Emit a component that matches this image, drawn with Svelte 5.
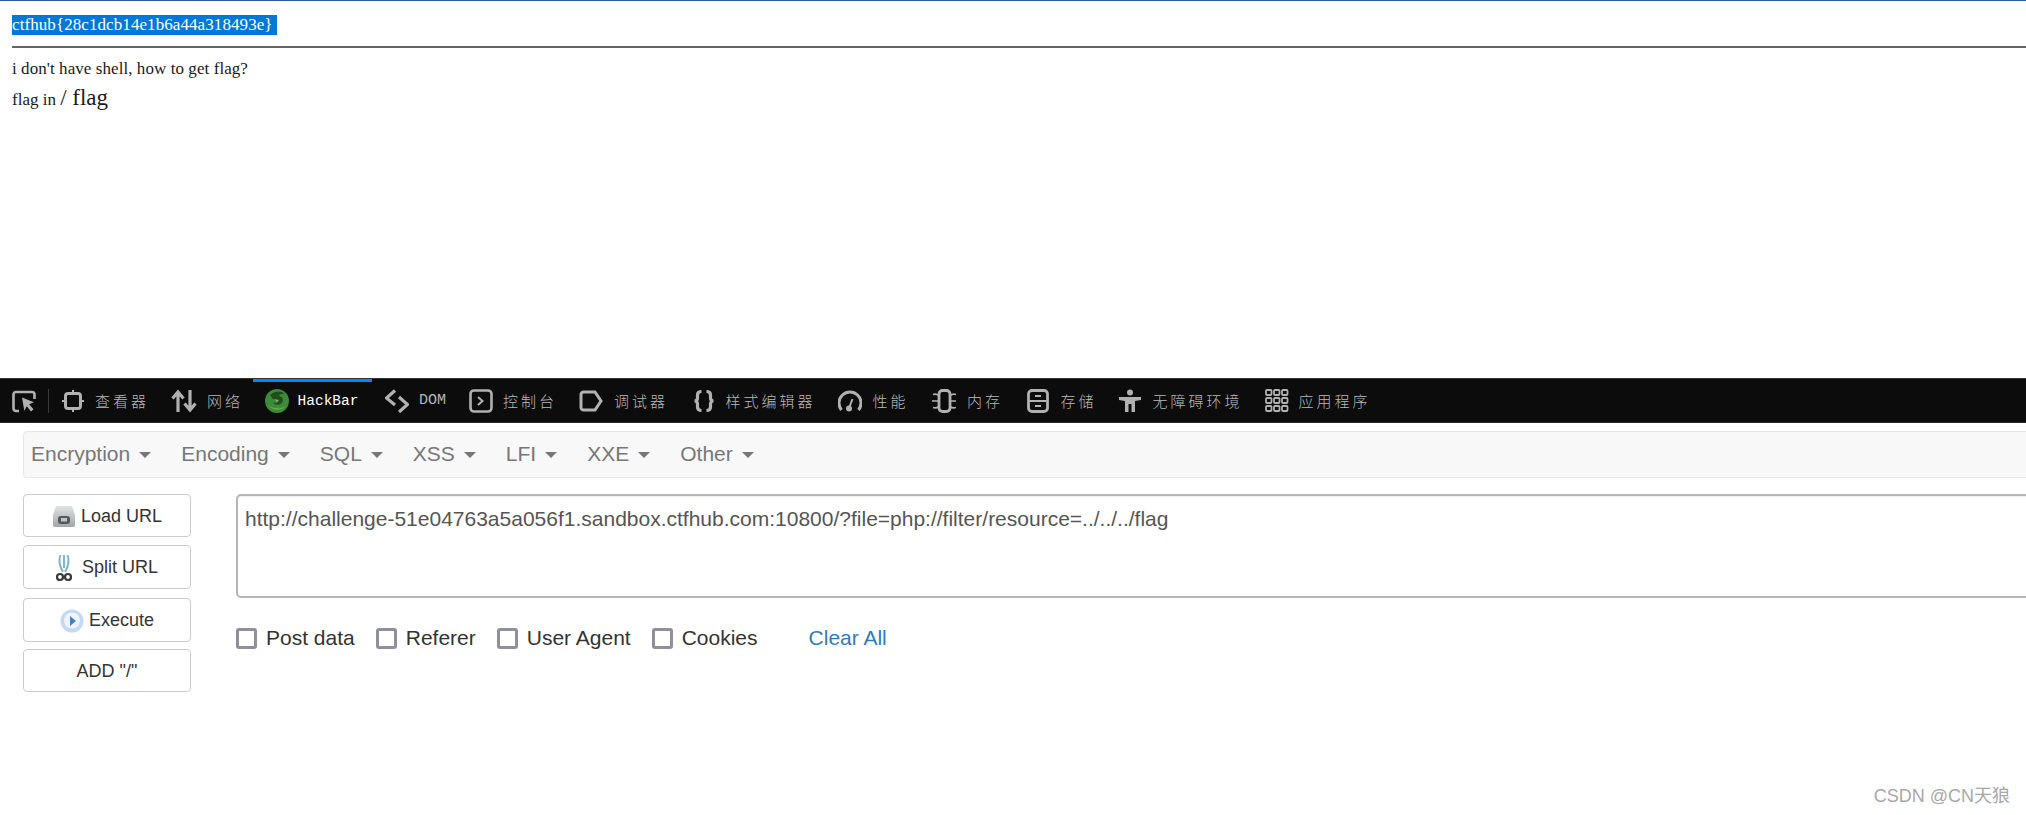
<script>
	const tabs = [
		{ id: 'inspector', label: '查看器' },
		{ id: 'network', label: '网络' },
		{ id: 'hackbar', label: 'HackBar', active: true },
		{ id: 'dom', label: 'DOM', latin: true },
		{ id: 'console', label: '控制台' },
		{ id: 'debugger', label: '调试器', short: true },
		{ id: 'style', label: '样式编辑器' },
		{ id: 'perf', label: '性能', short: true },
		{ id: 'memory', label: '内存', short: true },
		{ id: 'storage', label: '存储' },
		{ id: 'a11y', label: '无障碍环境' },
		{ id: 'apps', label: '应用程序' }
	];
	const menus = ['Encryption', 'Encoding', 'SQL', 'XSS', 'LFI', 'XXE', 'Other'];
	const checks = ['Post data', 'Referer', 'User Agent', 'Cookies'];
	let url = 'http://challenge-51e04763a5a056f1.sandbox.ctfhub.com:10800/?file=php://filter/resource=../../../flag';
</script>

<div class="root">
	<section class="page">
		<div class="flag"><span class="selected">ctfhub{'{'}28c1dcb14e1b6a44a318493e{'}'} </span></div>
		<hr />
		<p class="line">i don't have shell, how to get flag?</p>
		<p class="line two">flag in <span class="big">/ flag</span></p>
	</section>

	<div class="toolbar">
		<span class="pick">
			<svg width="24" height="24" viewBox="0 0 24 24" fill="none" stroke="#b1b1b1" stroke-width="2.6">
				<path d="M7 22H4a2.500 2.500 0 0 1-2.500-2.500v-14A2.500 2.500 0 0 1 4 3h16a2.500 2.500 0 0 1 2.500 2.500V10" />
				<path d="M10 8.500l12 4.800-4.800 2 4.300 5-2.500 2.200-4.200-5.200-2.500 4.500z" fill="#b1b1b1" stroke="none" />
			</svg>
		</span>
		{#each tabs as tab}
			<div class="tab" class:active={tab.active} class:short={tab.short} class:tight={tab.latin}>
				<svg
					class="icon"
					width={tab.id === 'network' ? 26 : 24}
					height="24"
					viewBox={tab.id === 'network' ? '0 0 26 24' : '0 0 24 24'}
					fill="none"
					stroke="#b1b1b1"
					stroke-width="2.600"
				>
					{#if tab.id === 'inspector'}
						<rect x="4.500" y="4.500" width="15" height="15" rx="2.500" stroke-width="3" />
						<path d="M12 1v3M12 20v3M1 12h3M20 12h3" stroke-width="2" />
					{:else if tab.id === 'network'}
						<path d="M7 23V3M1.500 9.500L7 3l5.500 6.500M19 1v20M13.500 14.500L19 21l5.500-6.500" stroke-width="3.200" />
					{:else if tab.id === 'hackbar'}
						<circle cx="12" cy="12" r="12" fill="#3f8a38" stroke="none" />
						<path d="M5 6c4-4 11-5 15-1-3-.5-5 .5-6 2 3 .5 5 3 3.500 6-2 3.500-7 3.500-9.500 .5 2.500 1 5 .5 5.500-1.500-3 0-6-1.500-8.500-6z" fill="#1f4f1c" stroke="none" />
						<path d="M3 16c4 6 13 6.500 18 1-5 3-12 3.500-18-1z" fill="#62a953" stroke="none" />
						<path d="M9 10l5 1-2 2z" fill="#7dbb6c" stroke="none" />
					{:else if tab.id === 'dom'}
						<path d="M10 1.500L1.500 9l8.500 7M14 8l8.500 7.500L14 23" stroke-width="3.200" />
					{:else if tab.id === 'console'}
						<rect x="1.500" y="1.500" width="21" height="21" rx="3.500" />
						<path d="M9 8l4.500 4L9 16" stroke-width="2" />
					{:else if tab.id === 'debugger'}
						<path d="M4.500 3h11.500L22 12l-6 9H4.500A2.500 2.500 0 0 1 2 18.500V5.500A2.500 2.500 0 0 1 4.500 3z" stroke-width="3" />
					{:else if tab.id === 'style'}
						<path d="M9.500 2.500c-3 0-4 1.500-4 3.500v3c0 2-1 3-3 3 2 0 3 1 3 3v3c0 2 1 3.500 4 3.500M14.500 2.500c3 0 4 1.500 4 3.500v3c0 2 1 3 3 3-2 0-3 1-3 3v3c0 2-1 3.500-4 3.500" stroke-width="3.200" />
					{:else if tab.id === 'perf'}
						<path d="M3.500 21A11 11 0 1 1 20.500 21" stroke-width="3" />
						<circle cx="11" cy="19.500" r="3" fill="#b1b1b1" stroke="none" />
						<path d="M11 19l3.500-9" stroke-width="2" />
					{:else if tab.id === 'memory'}
						<rect x="7" y="1.500" width="11" height="21" rx="3.500" stroke-width="2.800" />
						<path d="M1 5.500c3-1 4-.5 6 1M0 12h7M1 18.500c3 1 4 .5 6-1M18 6.500c2-1.500 3-2 6-1M18 12h6M18 17.500c2 1.500 3 2 6 1" stroke-width="1.600" />
					{:else if tab.id === 'storage'}
						<rect x="1.500" y="1.500" width="19" height="21" rx="3.500" stroke-width="2.800" />
						<path d="M1.500 12h19M8 7h6M8 17h6" stroke-width="2" />
					{:else if tab.id === 'a11y'}
						<circle cx="11" cy="3.500" r="3" fill="#b1b1b1" stroke="none" />
						<path d="M0 8h22v3l-6 1v11h-3.500v-8h-3v8H6V12l-6-1z" fill="#b1b1b1" stroke="none" />
					{:else}
						{#each [1, 9, 17] as y}
							{#each [1, 9, 17] as x}
								<rect {x} {y} width="5.500" height="5" rx="1" stroke-width="1.800" />
							{/each}
						{/each}
					{/if}
				</svg>
				<span class="tab-label" class:latin={tab.latin} class:bar={tab.active}>{tab.label}</span>
			</div>
		{/each}
	</div>

	<section class="hackbar">
		<nav class="menu">
			{#each menus as item}
				<span class="menu-item">{item}<i class="caret"></i></span>
			{/each}
		</nav>

		<div class="body">
			<div class="actions">
				<button>
					<svg width="24" height="22" viewBox="0 0 24 22">
						<defs>
							<linearGradient id="drive" x1="0" y1="0" x2="0" y2="1">
								<stop offset="0" stop-color="#dfe2e3" />
								<stop offset="1" stop-color="#a3a6a8" />
							</linearGradient>
						</defs>
						<path d="M4 1h16l3 9v10a2 2 0 0 1-2 2H3a2 2 0 0 1-2-2V10z" fill="url(#drive)" />
						<rect x="6" y="11" width="12" height="8" rx="3" fill="#55595b" />
						<rect x="9" y="13" width="6" height="3.500" fill="#c2c5c6" />
					</svg>
					Load URL
				</button>
				<button class="split">
					<svg width="16" height="28" viewBox="0 0 16 28" fill="none">
						<path d="M4.500 1c-2 5-1 11 2.500 17M11.500 1c2 5 1 11-2.500 17M8 1v13" stroke="#7fb4cc" stroke-width="2" />
						<circle cx="4" cy="23" r="3" stroke="#3a3a3a" stroke-width="2.200" />
						<circle cx="12" cy="23" r="3" stroke="#3a3a3a" stroke-width="2.200" />
					</svg>
					Split URL
				</button>
				<button class="run">
					<svg width="24" height="24" viewBox="0 0 24 24">
						<circle cx="12" cy="12" r="11.500" fill="#c5d9f0" />
						<circle cx="12" cy="11.500" r="8" fill="#eef4fb" />
						<path d="M10 7l6 5-6 5z" fill="#4a7fc0" />
					</svg>
					Execute
				</button>
				<button class="add">ADD "/"</button>
			</div>

			<div class="main">
				<textarea bind:value={url} spellcheck="false"></textarea>
				<div class="options">
					{#each checks as name}
						<label><input type="checkbox" />{name}</label>
					{/each}
					<span class="clear">Clear All</span>
				</div>
			</div>
		</div>
	</section>

	<span class="watermark">CSDN @CN天狼</span>
</div>

<style>
	:global(body) {
		overflow: hidden;
		background: #fff;
	}

	.root {
		position: relative;
		height: 815px;
		overflow: hidden;
		font-family: 'Liberation Sans', Arial, sans-serif;
	}

	.page {
		height: 378px;
		box-sizing: border-box;
		padding: 14px 12px 0;
		border-top: 1px solid #2b579a;
		font-family: 'Liberation Serif', 'Times New Roman', serif;
		font-size: 17px;
		color: #1a1a1a;
	}

	.flag {
		height: 20px;
	}

	.selected {
		display: inline-block;
		line-height: 20px;
		padding-right: 4px;
		letter-spacing: 0.08px;
		background: #0078d7;
		color: #fff;
		white-space: pre;
	}

	hr {
		margin: 11px -12px 0 0;
		border: 0;
		height: 2px;
		background: #666;
	}

	.line {
		margin: 11px 0 0;
		line-height: 20px;
		letter-spacing: 0.07px;
	}

	.line.two {
		margin-top: 5px;
		line-height: 28px;
		letter-spacing: 0;
	}

	.big {
		font-size: 23px;
	}

	.toolbar {
		display: flex;
		align-items: center;
		height: 45px;
		box-sizing: border-box;
		background: #0c0c0c;
		border-top: 1px solid #333;
		border-bottom: 1px solid #2a2a2a;
	}

	.pick {
		display: flex;
		padding: 0 11.500px 0 12px;
		border-right: 1px solid #3a3a3a;
	}

	.tab {
		display: flex;
		align-items: center;
		gap: 10px;
		height: 100%;
		padding: 0 12.500px;
		box-sizing: border-box;
	}

	.tab.short {
		gap: 11px;
		padding-right: 14px;
	}

	.tab.tight {
		padding-right: 10.500px;
	}

	.tab.active {
		gap: 9px;
		border-top: 3px solid #0a84ff;
		padding: 0 14px 3px 12px;
	}

	.icon {
		flex: none;
	}

	.tab-label {
		font-family: 'Noto Sans CJK SC', sans-serif;
		font-weight: 300;
		font-size: 15px;
		letter-spacing: 3px;
		margin-right: -3px;
		color: #b9b9b9;
		white-space: nowrap;
	}

	.tab-label.latin {
		font-family: 'Liberation Mono', monospace;
		font-size: 15px;
		font-weight: 400;
		letter-spacing: 0;
		margin-right: 0;
	}

	.tab-label.bar {
		font-family: 'Liberation Mono', monospace;
		font-size: 14.500px;
		font-weight: 400;
		letter-spacing: 0;
		margin-right: 0;
		color: #fff;
	}

	.hackbar {
		padding: 8px 0 0 23px;
	}

	.menu {
		display: flex;
		align-items: center;
		gap: 30px;
		height: 47px;
		box-sizing: border-box;
		margin-right: -10px;
		padding: 0 0 2px 7px;
		background: #f8f8f8;
		border: 1px solid #e7e7e7;
		border-radius: 4px;
		font-size: 21px;
		color: #777;
	}

	.menu-item {
		display: flex;
		align-items: center;
		gap: 9px;
	}

	.caret {
		margin-top: 3px;
		border-top: 6px solid #777;
		border-left: 6px solid transparent;
		border-right: 6px solid transparent;
	}

	.body {
		display: flex;
		gap: 45px;
		margin-top: 16px;
	}

	.actions {
		display: flex;
		flex-direction: column;
		gap: 8px;
		width: 168px;
		flex: none;
	}

	button {
		display: flex;
		align-items: center;
		justify-content: center;
		gap: 5px;
		height: 44px;
		padding: 1px 0 0;
		background: #fff;
		border: 1px solid #ccc;
		border-radius: 4px;
		font-family: inherit;
		font-size: 18px;
		color: #333;
	}

	button:first-child,
	.add {
		height: 43px;
	}

	.run {
		margin-top: 1px;
	}

	.add {
		margin-top: -1px;
	}

	.split {
		gap: 10px;
	}

	.main {
		flex: 1;
		margin-right: -10px;
	}

	textarea {
		display: block;
		width: 100%;
		height: 104px;
		box-sizing: border-box;
		padding: 9px 7px;
		border: 2px solid #b5b5b5;
		border-radius: 5px;
		outline: none;
		resize: none;
		font-family: inherit;
		font-size: 21px;
		line-height: 28px;
		color: #555;
		box-shadow: inset 0 1px 1px rgba(0, 0, 0, 0.075);
	}

	.options {
		display: flex;
		align-items: center;
		gap: 21px;
		margin-top: 28px;
		font-size: 21px;
		color: #333;
	}

	label {
		display: flex;
		align-items: center;
		gap: 9px;
	}

	input {
		appearance: none;
		width: 21px;
		height: 21px;
		margin: 0;
		box-sizing: border-box;
		border: 3px solid #8f8f9d;
		border-radius: 3px;
		background: #fff;
	}

	.clear {
		margin-left: 30px;
		color: #337ab7;
	}

	.watermark {
		position: absolute;
		right: 16px;
		bottom: 8px;
		font-family: 'Liberation Sans', 'Noto Sans CJK SC', sans-serif;
		font-size: 18px;
		color: #a8a8a8;
	}
</style>
